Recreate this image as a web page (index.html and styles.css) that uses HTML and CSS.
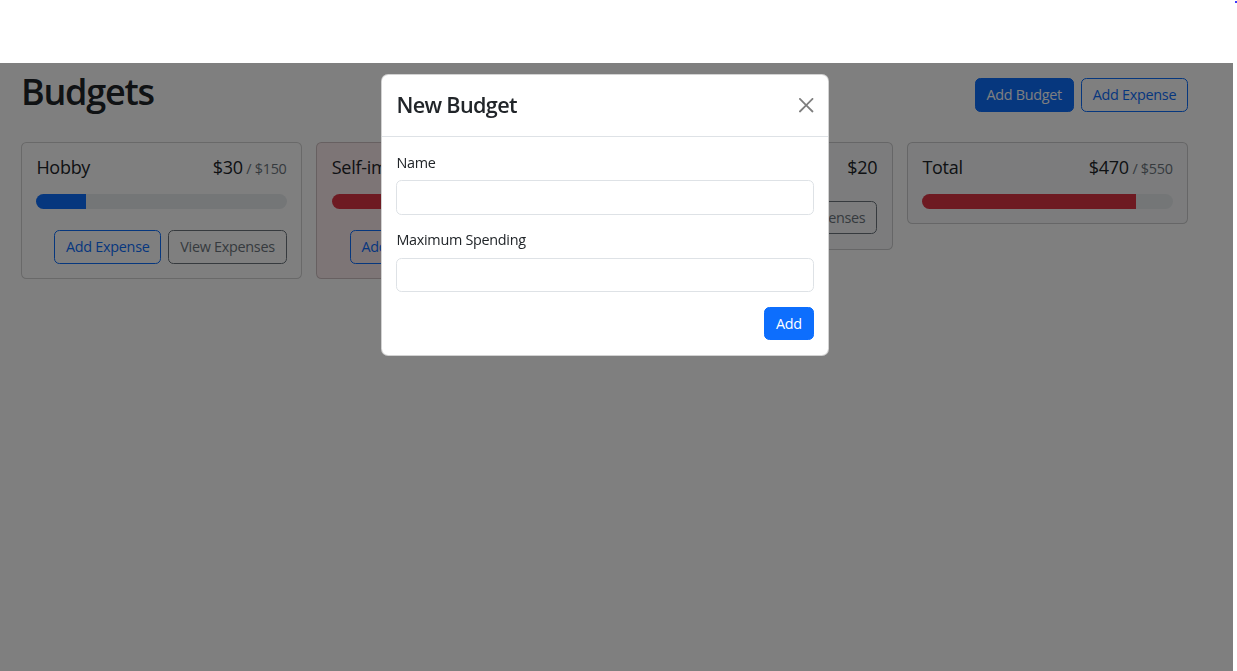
FILE: index.html
```html
<!DOCTYPE html>
<html lang="en">
<head>
<meta charset="utf-8">
<title>Budgets</title>
<link rel="stylesheet" href="styles.css">
</head>
<body>
<div class="topbar"></div>
<main class="page">
  <div class="page-head">
    <h1 class="page-title">Budgets</h1>
    <button class="btn btn-primary">Add Budget</button>
    <button class="btn btn-outline-primary">Add Expense</button>
  </div>
  <div class="cards">
    <section class="card">
      <div class="card-body">
        <div class="card-title">
          <div class="card-name">Hobby</div>
          <div class="card-amount">$30<span class="card-max">/ $150</span></div>
        </div>
        <div class="progress"><div class="progress-bar bar-primary" style="width:20%"></div></div>
        <div class="card-actions">
          <button class="btn btn-outline-primary">Add Expense</button>
          <button class="btn btn-outline-secondary">View Expenses</button>
        </div>
      </div>
    </section>
    <section class="card card-danger">
      <div class="card-body">
        <div class="card-title">
          <div class="card-name">Self-improvement</div>
          <div class="card-amount">$420<span class="card-max">/ $400</span></div>
        </div>
        <div class="progress"><div class="progress-bar bar-danger" style="width:100%"></div></div>
        <div class="card-actions">
          <button class="btn btn-outline-primary">Add Expense</button>
          <button class="btn btn-outline-secondary">View Expenses</button>
        </div>
      </div>
    </section>
    <section class="card card-light">
      <div class="card-body">
        <div class="card-title">
          <div class="card-name">Uncategorized</div>
          <div class="card-amount">$20</div>
        </div>
        <div class="card-actions">
          <button class="btn btn-outline-primary">Add Expense</button>
          <button class="btn btn-outline-secondary">View Expenses</button>
        </div>
      </div>
    </section>
    <section class="card card-light">
      <div class="card-body">
        <div class="card-title">
          <div class="card-name">Total</div>
          <div class="card-amount">$470<span class="card-max">/ $550</span></div>
        </div>
        <div class="progress"><div class="progress-bar bar-danger" style="width:85.45%"></div></div>
      </div>
    </section>
  </div>
</main>
<div class="backdrop"></div>
<div class="modal" role="dialog">
  <div class="modal-header">
    <h4 class="modal-title">New Budget</h4>
    <button class="btn-close" aria-label="Close">
      <svg viewBox="0 0 16 16" width="14" height="14"><path d="M.293.293a1 1 0 0 1 1.414 0L8 6.586 14.293.293a1 1 0 1 1 1.414 1.414L9.414 8l6.293 6.293a1 1 0 0 1-1.414 1.414L8 9.414l-6.293 6.293a1 1 0 0 1-1.414-1.414L6.586 8 .293 1.707a1 1 0 0 1 0-1.414z" fill="#000"/></svg>
    </button>
  </div>
  <div class="modal-body">
    <div class="form-group">
      <label class="form-label" for="name">Name</label>
      <input class="form-control" id="name" type="text">
    </div>
    <div class="form-group">
      <label class="form-label" for="max">Maximum Spending</label>
      <input class="form-control" id="max" type="number">
    </div>
    <div class="form-actions">
      <button class="btn btn-primary">Add</button>
    </div>
  </div>
</div>
</body>
</html>
```
FILE: styles.css
```css
* { box-sizing: border-box; }

html, body {
  margin: 0;
  background: #fff;
}

body {
  font-family: "Open Sans", "Noto Sans", sans-serif;
  font-size: 14.4px;
  line-height: 21.6px;
  color: #212529;
  letter-spacing: -0.02em;
}

.topbar {
  height: 63px;
  background: #fff;
  position: relative;
}

.topbar::after {
  content: "";
  position: absolute;
  top: 1px;
  left: 1235px;
  width: 2px;
  height: 2px;
  background: #3a3aff;
}

.page {
  width: 1167px;
  margin-left: 21px;
  padding-top: 7px;
}

.page-head {
  display: flex;
  align-items: center;
  gap: 7.2px;
  margin-bottom: 21.6px;
}

.page-title {
  margin: 0 auto 7.2px 0;
  font-size: 36px;
  line-height: 43.2px;
  font-weight: 600;
  letter-spacing: -0.035em;
}

.btn {
  font-family: inherit;
  font-size: 14.4px;
  line-height: 21.6px;
  letter-spacing: inherit;
  padding: 5px 10.8px;
  border: 1px solid transparent;
  border-radius: 5.4px;
  background: transparent;
  cursor: pointer;
}

.btn-primary {
  background: #0d6efd;
  border-color: #0d6efd;
  color: #fff;
}

.btn-outline-primary {
  border-color: #0d6efd;
  color: #0d6efd;
}

.btn-outline-secondary {
  border-color: #6c757d;
  color: #6c757d;
}

.cards {
  display: grid;
  grid-template-columns: repeat(4, 1fr);
  gap: 14.4px;
  align-items: start;
}

.card {
  border: 1px solid rgba(0, 0, 0, 0.175);
  border-radius: 5.4px;
  background: #fff;
}

.card-danger { background: rgba(220, 53, 69, 0.1); }
.card-light { background: #f8f9fa; }

.card-body {
  padding: 14.4px;
}

.card-title {
  display: flex;
  justify-content: space-between;
  align-items: baseline;
  font-size: 18px;
  line-height: 21.6px;
  margin-bottom: 14.4px;
}

.card-name {
  margin-right: 7.2px;
  white-space: nowrap;
}

.card-amount {
  display: flex;
  align-items: baseline;
}

.card-max {
  font-size: 14.4px;
  color: #6c757d;
  margin-left: 3.6px;
}

.progress {
  height: 14.4px;
  border-radius: 50rem;
  background: #e9ecef;
  overflow: hidden;
  display: flex;
}

.progress-bar { height: 100%; }
.bar-primary { background: #0d6efd; }
.bar-danger { background: #dc3545; }

.card-actions {
  display: flex;
  justify-content: flex-end;
  gap: 7.2px;
  margin-top: 21.6px;
}

.backdrop {
  position: fixed;
  top: 63px;
  left: 0;
  right: 4px;
  bottom: 0;
  background: rgba(0, 0, 0, 0.5);
}

.modal {
  position: fixed;
  top: 74px;
  left: 381px;
  width: 448px;
  background: #fff;
  border: 1px solid rgba(0, 0, 0, 0.175);
  border-radius: 7.2px;
}

.modal-header {
  display: flex;
  align-items: center;
  justify-content: space-between;
  padding: 14.4px;
  border-bottom: 1px solid #dee2e6;
}

.modal-title {
  margin: 0;
  font-size: 21.6px;
  line-height: 32.4px;
  font-weight: 600;
  letter-spacing: -0.03em;
}

.btn-close {
  width: 21.6px;
  height: 21.6px;
  padding: 3.6px;
  border: 0;
  background: transparent;
  opacity: 0.5;
  display: flex;
  align-items: center;
  justify-content: center;
  margin-right: -3.6px;
}

.btn-close svg {
  width: 14.4px;
  height: 14.4px;
  display: block;
}

.modal-body {
  padding: 14.4px;
}

.form-group {
  margin-bottom: 14.4px;
}

.form-label {
  display: block;
  margin-bottom: 7.2px;
}

.form-control {
  display: block;
  width: 100%;
  height: 34.4px;
  padding: 5.4px 10.8px;
  font: inherit;
  border: 1px solid #dee2e6;
  border-radius: 5.4px;
  background: #fff;
}

.form-actions {
  display: flex;
  justify-content: flex-end;
}
```
